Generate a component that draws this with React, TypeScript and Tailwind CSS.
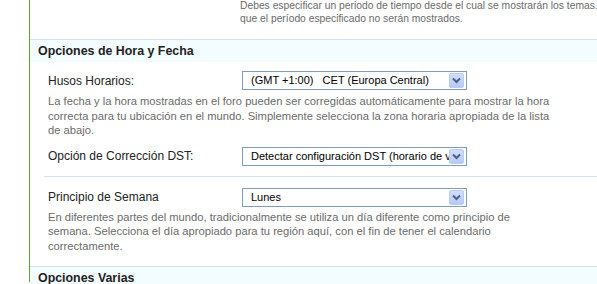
import React from 'react';

const font = { fontFamily: '"Liberation Sans", Arial, sans-serif' };

function Select({ value }: { value: string }) {
  return (
    <div className="w-[225px] h-[19px] border border-[#7f9db9] bg-white flex items-center overflow-hidden">
      <div className="flex-1 overflow-hidden whitespace-pre text-[11px] text-black pl-[8px] leading-[17px]">
        {value}
      </div>
      <div className="w-[15px] h-[15px] mr-[2px] shrink-0 rounded-[2px] border border-[#b9ccf4] bg-gradient-to-b from-[#d2defc] to-[#b6c9f7] flex items-center justify-center">
        <svg width="9" height="7" viewBox="0 0 9 7">
          <path d="M1 1.5 L4.5 5 L8 1.5" stroke="#4d6185" strokeWidth="2" fill="none" />
        </svg>
      </div>
    </div>
  );
}

function Row({ label, value }: { label: string; value: string }) {
  return (
    <div className="flex items-center h-[19px]">
      <div className="w-[212px] pl-[18px] text-[12px] text-[#222]">{label}</div>
      <Select value={value} />
    </div>
  );
}

function Desc({ lines }: { lines: string[] }) {
  return (
    <div className="pl-[18px] text-[11.2px] leading-[14.5px] text-[#6b6b6b] whitespace-nowrap">
      {lines.map((l) => (
        <div key={l}>{l}</div>
      ))}
    </div>
  );
}

export default function App() {
  return (
    <div className="w-[597px] h-[284px] overflow-hidden bg-white" style={font}>
      <div className="ml-[29px] border-l border-[#5aa332] h-full">
        <div className="h-[39px] pl-[210px] pt-[1px] -mt-[2px] text-[10.3px] leading-[13px] text-[#6b6b6b] whitespace-nowrap overflow-hidden">
          <div>Debes especificar un periodo de tiempo desde el cual se mostrarán los temas. Los temas anteriores a</div>
          <div>que el período especificado no serán mostrados.</div>
        </div>
        <div className="border-t border-[#d0e2ee] bg-[#f3fcff] h-[23px] mt-[2px] pl-[8px] flex items-center text-[12.4px] font-bold text-[#222]">
          Opciones de Hora y Fecha
        </div>
        <div className="mt-[9px]">
          <Row label="Husos Horarios:" value="(GMT +1:00)   CET (Europa Central)" />
        </div>
        <div className="mt-[4px]">
          <Desc
            lines={[
              'La fecha y la hora mostradas en el foro pueden ser corregidas automáticamente para mostrar la hora',
              'correcta para tu ubicación en el mundo. Simplemente selecciona la zona horaria apropiada de la lista',
              'de abajo.',
            ]}
          />
        </div>
        <div className="mt-[9px]">
          <Row label="Opción de Corrección DST:" value="Detectar configuración DST (horario de verano)" />
        </div>
        <div className="ml-[14px] mt-[10px] border-t border-[#d0e2ee]"></div>
        <div className="mt-[11px]">
          <Row label="Principio de Semana" value="Lunes" />
        </div>
        <div className="mt-[3px]">
          <Desc
            lines={[
              'En diferentes partes del mundo, tradicionalmente se utiliza un día diferente como principio de',
              'semana. Selecciona el día apropiado para tu región aquí, con el fin de tener el calendario',
              'correctamente.',
            ]}
          />
        </div>
        <div className="mt-[13px] border-t border-[#d0e2ee] bg-[#f3fcff] h-[23px] pl-[8px] flex items-center text-[12.4px] font-bold text-[#222]">
          Opciones Varias
        </div>
      </div>
    </div>
  );
}
